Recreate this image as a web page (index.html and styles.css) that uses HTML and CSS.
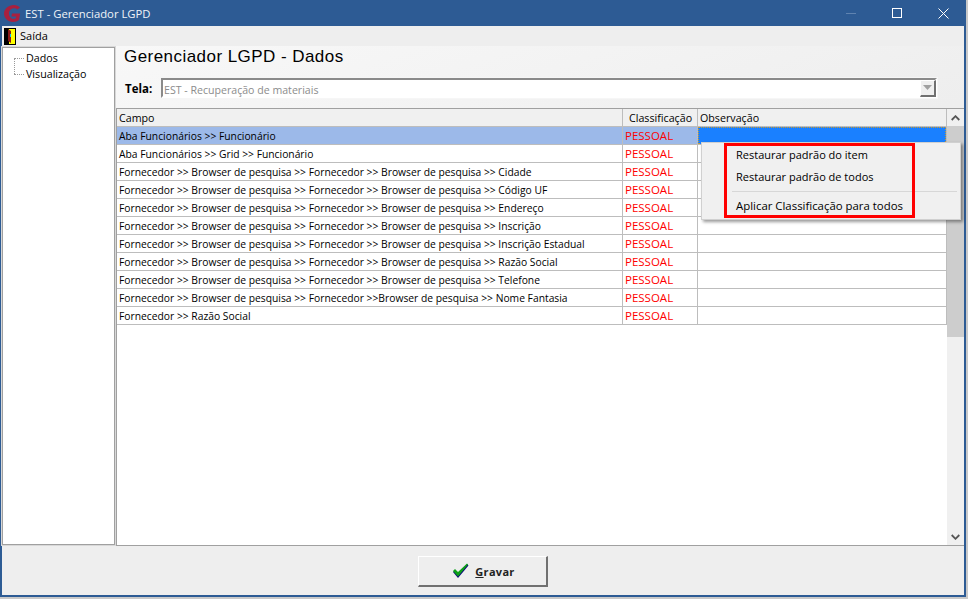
FILE: index.html
```html
<!DOCTYPE html>
<html lang="pt">
<head>
<meta charset="utf-8">
<title>EST - Gerenciador LGPD</title>
<link rel="stylesheet" href="styles.css">
</head>
<body>
<div class="window">
  <header class="titlebar">
    <svg class="logo" width="17" height="17" viewBox="0 0 17 17"><path d="M16 2.500C14.500 1 12.300 0 10 0 4.500 0 0 3.800 0 8.500 0 13.200 4 17 9 17c2.500 0 4.500-.7 6-2l1.200-6.500H8l-.6 3h4.800l-.4 1.700c-.8.400-1.600.6-2.400.6C7 13.800 5 11.500 5 8.500 5 5.500 7.300 3.300 10 3.300c1.300 0 2.500.4 3.300 1.200z" fill="#a8203f"/></svg>
    <span class="title">EST - Gerenciador LGPD</span>
    <div class="winbtns">
      <span class="wb"><svg width="10" height="10" viewBox="0 0 10 10"><path d="M0 5.500h10" stroke="#5f83b0"/></svg></span>
      <span class="wb"><svg width="10" height="10" viewBox="0 0 10 10"><rect x=".5" y=".5" width="9" height="9" fill="none" stroke="#fff"/></svg></span>
      <span class="wb"><svg width="11" height="11" viewBox="0 0 11 11"><path d="M.5.500l10 10M10.500.500l-10 10" stroke="#fff"/></svg></span>
    </div>
  </header>
  <nav class="menubar">
    <svg width="12" height="17" viewBox="0 0 12 17"><rect width="12" height="17" fill="#000"/><rect x="5" y="1" width="6" height="15" fill="#ffff00"/><path d="M4 1l3 2v12l-3-2z" fill="#8a1a1a"/><rect x="6" y="6" width="1" height="3" fill="#00c8ff"/></svg>
    <span>Saída</span>
  </nav>
  <div class="content">
    <aside class="tree">
      <div class="node">Dados</div>
      <div class="node">Visualização</div>
    </aside>
    <main class="main">
      <h1 class="heading">Gerenciador LGPD - Dados</h1>
      <div class="field">
        <label class="flabel">Tela:</label>
        <div class="combo">
          <span class="combotext">EST - Recuperação de materiais</span>
          <span class="combobtn"><svg width="9" height="5" viewBox="0 0 9 5"><path d="M0 0h9L4.500 5z" fill="#a0a0a0"/></svg></span>
        </div>
      </div>
      <div class="gridbox">
        <div class="grid">
          <div class="row head"><div class="c1">Campo</div><div class="c2">Classificação</div><div class="c3">Observação</div></div>
          <div class="row sel"><div class="c1">Aba Funcionários &gt;&gt; Funcionário</div><div class="c2">PESSOAL</div><div class="c3"></div></div>
          <div class="row"><div class="c1">Aba Funcionários &gt;&gt; Grid &gt;&gt; Funcionário</div><div class="c2">PESSOAL</div><div class="c3"></div></div>
          <div class="row"><div class="c1">Fornecedor &gt;&gt; Browser de pesquisa &gt;&gt; Fornecedor &gt;&gt; Browser de pesquisa &gt;&gt; Cidade</div><div class="c2">PESSOAL</div><div class="c3"></div></div>
          <div class="row"><div class="c1">Fornecedor &gt;&gt; Browser de pesquisa &gt;&gt; Fornecedor &gt;&gt; Browser de pesquisa &gt;&gt; Código UF</div><div class="c2">PESSOAL</div><div class="c3"></div></div>
          <div class="row"><div class="c1">Fornecedor &gt;&gt; Browser de pesquisa &gt;&gt; Fornecedor &gt;&gt; Browser de pesquisa &gt;&gt; Endereço</div><div class="c2">PESSOAL</div><div class="c3"></div></div>
          <div class="row"><div class="c1">Fornecedor &gt;&gt; Browser de pesquisa &gt;&gt; Fornecedor &gt;&gt; Browser de pesquisa &gt;&gt; Inscrição</div><div class="c2">PESSOAL</div><div class="c3"></div></div>
          <div class="row"><div class="c1">Fornecedor &gt;&gt; Browser de pesquisa &gt;&gt; Fornecedor &gt;&gt; Browser de pesquisa &gt;&gt; Inscrição Estadual</div><div class="c2">PESSOAL</div><div class="c3"></div></div>
          <div class="row"><div class="c1">Fornecedor &gt;&gt; Browser de pesquisa &gt;&gt; Fornecedor &gt;&gt; Browser de pesquisa &gt;&gt; Razão Social</div><div class="c2">PESSOAL</div><div class="c3"></div></div>
          <div class="row"><div class="c1">Fornecedor &gt;&gt; Browser de pesquisa &gt;&gt; Fornecedor &gt;&gt; Browser de pesquisa &gt;&gt; Telefone</div><div class="c2">PESSOAL</div><div class="c3"></div></div>
          <div class="row"><div class="c1">Fornecedor &gt;&gt; Browser de pesquisa &gt;&gt; Fornecedor &gt;&gt;Browser de pesquisa &gt;&gt; Nome Fantasia</div><div class="c2">PESSOAL</div><div class="c3"></div></div>
          <div class="row"><div class="c1">Fornecedor &gt;&gt; Razão Social</div><div class="c2">PESSOAL</div><div class="c3"></div></div>
        </div>
        <div class="scrollbar">
          <span class="arrow"><svg width="9" height="6" viewBox="0 0 9 6"><path d="M.7 5L4.500 1.200 8.300 5" fill="none" stroke="#555" stroke-width="1.800"/></svg></span>
          <div class="track"><div class="thumb"></div></div>
          <span class="arrow"><svg width="9" height="6" viewBox="0 0 9 6"><path d="M.7 1L4.500 4.800 8.300 1" fill="none" stroke="#555" stroke-width="1.800"/></svg></span>
        </div>
        <div class="ctxmenu">
          <div class="redbox"></div>
          <div class="mi">Restaurar padrão do item</div>
          <div class="mi">Restaurar padrão de todos</div>
          <div class="sep"></div>
          <div class="mi mi-wide">Aplicar Classificação para todos</div>
        </div>
      </div>
    </main>
  </div>
  <footer class="footer">
    <button class="btn" type="button">
      <svg width="17" height="16" viewBox="0 0 17 16"><path d="M1 9l2-2 3 3 9-9 1.500 1.500L6 15z" fill="#0c0c7a"/><path d="M1 8l2-2 3 3 9-8.500 1 1L6 13.500z" fill="#0da018"/></svg>
      <span><u>G</u>ravar</span>
    </button>
  </footer>
</div>
</body>
</html>
```
FILE: styles.css
```css
* { box-sizing: border-box; }
html, body { margin: 0; padding: 0; background: #c9c9c9; }
body { width: 968px; height: 599px; overflow: hidden; font-family: "Open Sans", sans-serif; font-size: 10.700px; color: #000; }
.window { width: 966px; height: 597px; border-left: 2px solid #2d5b94; border-right: 2px solid #2d5b94; border-bottom: 2px solid #2d5b94; background: #eeeeee; display: flex; flex-direction: column; }
.titlebar { height: 26px; margin-left: -2px; margin-right: -2px; background: #2d5b94; display: flex; align-items: center; padding-left: 4px; flex: none; }
.logo { margin-right: 4px; }
.title { font-size: 11.300px; color: #f0f4f8; }
.winbtns { margin-left: auto; display: flex; }
.wb { width: 46px; height: 26px; display: flex; align-items: center; justify-content: center; }
.menubar { height: 20px; flex: none; display: flex; align-items: center; gap: 4px; padding-left: 2px; }
.menubar span { font-size: 11px; padding-bottom: 2px; }
.content { flex: 1; display: flex; min-height: 0; }
.tree { width: 113px; background: #fff; border: 1px solid #a0a0a0; outline: 1px solid #d8d8d8; flex: none; padding: 3px 0 0 23px; margin: 1px 1px 1px 0; }
.node { height: 16px; line-height: 15px; position: relative; }
.node::before { content: ""; position: absolute; left: -12px; top: 7px; width: 10px; border-top: 1px dotted #999; }
.node + .node::after { content: ""; position: absolute; left: -12px; top: -8px; height: 15px; border-left: 1px dotted #999; }
.main { flex: 1; display: flex; flex-direction: column; min-width: 0; background: linear-gradient(160deg, #f8f8f8 0, #eeeeee 45%); }
.heading { font-family: "Liberation Sans", sans-serif; font-weight: 400; font-size: 17px; letter-spacing: .45px; margin: 0; padding: 1px 0 0 8px; height: 29px; line-height: 20px; flex: none; }
.field { display: flex; align-items: center; height: 32px; padding: 0 0 6px 9px; flex: none; }
.flabel { font-weight: 700; width: 36px; font-size: 11.500px; }
.combo { width: 776px; height: 20px; background: #fff; border: 2px solid #8a8a8a; border-right-color: #fff; border-bottom-color: #fff; outline: 1px solid #f6f6f6; display: flex; align-items: center; color: #8c8c8c; padding-left: 1px; font-size: 10.600px; }
.combotext { flex: 1; padding-top: 3px; }
.combobtn { width: 16px; height: 17px; background: #efefef; border: 1px solid #fff; border-right: 2px solid #707070; border-bottom: 2px solid #707070; display: flex; align-items: center; justify-content: center; margin-right: -1px; }
.gridbox { position: relative; flex: 1; display: flex; background: #fff; border-top: 1px solid #a0a0a0; border-bottom: 1px solid #a0a0a0; border-left: 1px solid #a0a0a0; margin-top: 1px; min-height: 0; }
.grid { width: 830px; flex: none; }
.row { display: grid; grid-template-columns: 506px 75px 1fr; height: 18px; line-height: 18px; border-bottom: 1px solid #bdbdbd; border-right: 1px solid #bdbdbd; font-size: 10.300px; }
.row > div { padding-left: 2px; border-right: 1px solid #bdbdbd; white-space: nowrap; overflow: hidden; }
.row > .c3 { border-right: 0; }
.row > .c2 { color: #ff0000; padding-left: 2px; font-size: 11.500px; }
.head { background: #f0f0f0; font-size: 10.700px; }
.head > .c2 { color: #000; padding-left: 6px; font-size: 10.700px; }
.sel .c1, .sel .c2 { background: #9cb9e9; }
.sel .c3 { background: #1a80ff; border: 1px dotted #c49a3a; }
.scrollbar { width: 17px; flex: none; background: #f0f0f0; display: flex; flex-direction: column; }
.arrow { height: 17px; display: flex; align-items: center; justify-content: center; flex: none; }
.track { flex: 1; }
.thumb { height: 211px; background: #cdcdcd; }
.ctxmenu { position: absolute; left: 584px; top: 33px; width: 260px; height: 78px; background: #f0f0f0; border: 1px solid #d0d0d0; box-shadow: 2px 2px 3px rgba(0,0,0,.4); padding: 2px 0 0; font-size: 11px; }
.mi { height: 22px; line-height: 20px; padding-left: 34px; }
.mi-wide { font-size: 11.400px; }
.sep { height: 1px; background: #d7d7d7; margin: 2px 3px 4px 30px; }
.redbox { position: absolute; left: 22px; top: 0; width: 191px; height: 75px; border: 3px solid #ff0000; }
.footer { height: 49px; flex: none; display: flex; align-items: center; justify-content: center; padding: 2px 1px 0 0; }
.btn { width: 130px; height: 31px; background: #eeeeee; border: 1px solid #fff; border-right: 2px solid #707070; border-bottom: 2px solid #707070; font-family: "Open Sans", sans-serif; font-weight: 700; font-size: 11px; display: flex; align-items: center; justify-content: center; gap: 6px; padding: 0 0 0 3px; color: #222; letter-spacing: .3px; }
```
